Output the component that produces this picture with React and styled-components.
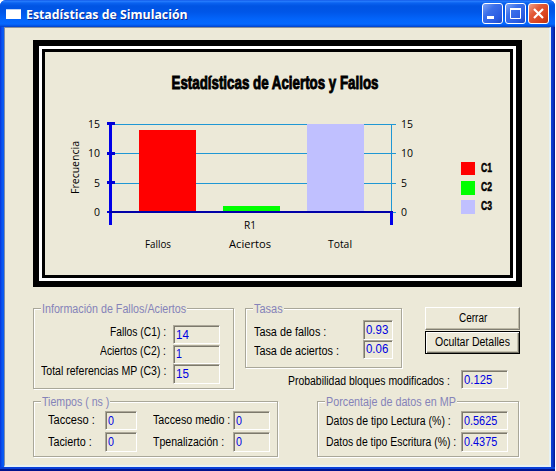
import React, { useLayoutEffect, useRef, useState } from "react";
import styled, { createGlobalStyle, css } from "styled-components";

const FACE = "#ece9d8";

const GlobalStyle = createGlobalStyle`
  * { box-sizing: border-box; }
  body {
    margin: 0;
    background: #fff;
    font: 12.5px/14px "Liberation Sans", Arial, sans-serif;
    color: #000;
    overflow: hidden;
  }
`;

const FitBox = styled.span`
  display: block;
  flex: none;
  width: ${(p) => p.$w}px;
  height: 14px;
  line-height: 14px;
  white-space: nowrap;
`;

const FitText = styled.span`
  display: inline-block;
  transform-origin: 0 0;
`;

/* Condenses a line of text to the pixel width of the bitmap UI font. */
function Fit({ w, children }) {
  const ref = useRef(null);
  const [scale, setScale] = useState(1);
  useLayoutEffect(() => {
    setScale(w / ref.current.offsetWidth);
  }, [w, children]);
  return (
    <FitBox $w={w}>
      <FitText ref={ref} style={{ transform: `scaleX(${scale})` }}>{children}</FitText>
    </FitBox>
  );
}

const Window = styled.div`
  width: 555px;
  height: 471px;
  display: flex;
  flex-direction: column;
  padding: 0 4px 4px;
  border-radius: 6px 6px 0 0;
  background: linear-gradient(90deg, #0831d9, #0855f0 2px, #0a5cf5 4px, #0a40d8 551px, #0a35c4 553px, #00138c 555px);
  box-shadow: inset 0 -2px 0 #00138c, inset 0 -4px 0 #0a40d8;
`;

const TitleBar = styled.header`
  flex: none;
  height: 27px;
  margin: 0 -4px;
  padding: 0 6px 0 6px;
  display: flex;
  align-items: center;
  border-radius: 6px 6px 0 0;
  background: linear-gradient(180deg, #0a4ce0 0, #2a80ff 1px, #0a62f0 3px, #0054e3 6px, #0056e8 12px, #0364fa 19px, #0468ff 24px, #0250e0 26px, #0140c8 27px);
`;

const AppIcon = styled.i`
  width: 15px;
  height: 10px;
  margin-right: 5px;
  background: #fff;
  border-top: 1px solid #b9d2f8;
`;

const Caption = styled.h1`
  flex: 1;
  margin: 1px 0 0;
  font: bold 13px/14px "Open Sans", "Noto Sans", sans-serif;
  color: #fff;
  text-shadow: 1px 1px 0 #0a2a90;
`;

const Controls = styled.div`
  display: flex;
  gap: 2px;
`;

const ControlButton = styled.button`
  width: 21px;
  height: 21px;
  padding: 0;
  border: 1px solid #fff;
  border-radius: 3px;
  background: ${(p) =>
    p.$close
      ? "linear-gradient(135deg, #f0a08a, #e35a38 35%, #d8401c 75%, #b83410)"
      : "linear-gradient(135deg, #7ea4f4, #3c70ea 35%, #2a5ce2 75%, #1c48c4)"};
  svg { display: block; }
`;

const Client = styled.main`
  flex: 1;
  padding: 12px 29px 0 28px;
  border: solid;
  border-width: 1px 2px 2px 1px;
  border-color: #8a8f98 #e6f1f4 #e6f1f4 #7d8ca8;
  background: ${FACE};
`;

const ChartFrame = styled.section`
  width: 489px;
  height: 247px;
  border: 6px solid #000;
  box-shadow: inset 0 0 0 3px #fff, inset 0 0 0 6px #000;
  padding: 6px;
  svg { display: block; }
`;

const Line = styled.div`
  display: flex;
  align-items: flex-start;
`;

const UpperPanels = styled(Line)`
  margin-top: 21px;
  height: 83px;
  gap: 11px;
`;

const UpperRight = styled.div`
  width: 275px;
`;

const RatesAndButtons = styled(Line)`
  justify-content: space-between;
  height: 62px;
`;

const LowerPanels = styled(Line)`
  margin-top: 10px;
  gap: 39px;
`;

const Group = styled.section`
  flex: none;
  width: ${(p) => p.$w}px;
  height: ${(p) => p.$h}px;
  border: 1px solid #a9a799;
  box-shadow: 1px 1px 0 #fff, inset 1px 1px 0 #fff;
`;

const GroupTitle = styled.h2`
  display: table;
  margin: -7px 0 0 7px;
  padding: 0 1px;
  font: inherit;
  color: #8583b8;
  background: ${FACE};
`;

const Rows = styled.div`
  display: grid;
  grid-template-rows: ${(p) => p.$rows};
  row-gap: ${(p) => p.$gap || 0}px;
  padding: ${(p) => p.$pad};
`;

const FieldRow = styled(Line)`
  justify-content: ${(p) => (p.$end ? "flex-end" : "space-between")};
  gap: ${(p) => p.$gap}px;
`;

const LabelSlot = styled.span`
  margin-top: ${(p) => p.$top || 0}px;
`;

const Value = styled.output`
  display: block;
  flex: none;
  width: ${(p) => p.$w}px;
  height: ${(p) => p.$h || 19}px;
  padding: ${(p) => p.$pad || 2}px 0 0 2px;
  border: 1px solid;
  border-color: #aca899 #fff #fff #aca899;
  box-shadow: inset 1px 1px 0 #7c796c;
  color: #0000e0;
`;

const ButtonStack = styled.div`
  display: grid;
  gap: 1px;
  margin-top: -1px;
`;

const raised = css`
  border: 1px solid;
  border-color: #fff #807e72 #807e72 #fff;
  box-shadow: inset -1px -1px 0 #bdb9a6;
`;

const focused = css`
  border: 1px solid #000;
  box-shadow: inset 1px 1px 0 #fff, inset -1px -1px 0 #716f64, inset -2px -2px 0 #c4c0ae;
`;

const PushButton = styled.button`
  width: 95px;
  height: 23px;
  padding: 0 0 1px;
  display: flex;
  align-items: center;
  justify-content: center;
  background: ${FACE};
  font: inherit;
  color: #000;
  ${(p) => (p.$focused ? focused : raised)}
`;

const ProbabilityRow = styled(Line)`
  padding-left: 43px;
  gap: 11px;
`;

const ChartText = styled.text`
  font: 11.5px "Open Sans", "Noto Sans", sans-serif;
  fill: #000;
`;

const HeavyText = styled.text`
  font: bold ${(p) => p.$size}px "Liberation Sans Narrow", "Liberation Sans", sans-serif;
  fill: #000;
  stroke: #000;
  stroke-width: ${(p) => p.$weight}px;
`;

const AXIS = [
  { label: "15", y: 124, tick: 122, base: 128 },
  { label: "10", y: 153, tick: 152, base: 157 },
  { label: "5", y: 183, tick: 181, base: 187 },
  { label: "0", y: 212, tick: 211, base: 216 },
];
const BARS = [
  { label: "Fallos", x: 139, y: 130, color: "#ff0000", tx: 145, tw: 26 },
  { label: "Aciertos", x: 223, y: 206, color: "#00ff00", tx: 229, tw: 42 },
  { label: "Total", x: 307, y: 124, color: "#c0c0ff", tx: 328, tw: 24 },
];
const LEGEND = [
  { label: "C1", y: 162, h: 13, color: "#ff0000" },
  { label: "C2", y: 181, h: 14, color: "#00ff00" },
  { label: "C3", y: 200, h: 14, color: "#c0c0ff" },
];

function Chart() {
  return (
    <svg width="465" height="223" viewBox="45 52 465 223" shapeRendering="crispEdges">
      <HeavyText $size={18} $weight={0.9} x="171.500" y="89" textLength="207" lengthAdjust="spacingAndGlyphs">
        Estadísticas de Aciertos y Fallos
      </HeavyText>
      {AXIS.map((a) => (
        <g key={a.label}>
          <rect x="112" y={a.y} width="284" height="1" fill="#1f97d4" />
          <ChartText x={a.label.length > 1 ? 88 : 94} y={a.base} textLength={a.label.length * 6} lengthAdjust="spacingAndGlyphs">{a.label}</ChartText>
          <ChartText x="401" y={a.base} textLength={a.label.length * 6} lengthAdjust="spacingAndGlyphs">{a.label}</ChartText>
        </g>
      ))}
      <rect x="391" y="124" width="1" height="88" fill="#1f97d4" />
      {BARS.map((b) => (
        <g key={b.label}>
          <rect x={b.x} y={b.y} width="57" height={211 - b.y} fill={b.color} />
          <ChartText x={b.tx} y="248" textLength={b.tw} lengthAdjust="spacingAndGlyphs">{b.label}</ChartText>
        </g>
      ))}
      <rect x="109" y="122" width="3" height="103" fill="#0000e8" />
      {AXIS.map((a) => (
        <rect key={a.label} x="107" y={a.tick} width="8" height={a.label === "0" ? 2 : 3} fill="#0000d8" />
      ))}
      <rect x="109" y="211" width="284" height="2" fill="#0000a8" />
      <rect x="390" y="212" width="3" height="13" fill="#0000e8" />
      <ChartText x="244" y="229" textLength="12" lengthAdjust="spacingAndGlyphs">R1</ChartText>
      <ChartText transform="translate(79 194) rotate(-90)" textLength="53" lengthAdjust="spacingAndGlyphs">Frecuencia</ChartText>
      {LEGEND.map((l) => (
        <g key={l.label}>
          <rect x="461" y={l.y} width="14" height={l.h} fill={l.color} />
          <HeavyText $size={12.5} $weight={0.5} x="481" y={l.y + 10} textLength="11" lengthAdjust="spacingAndGlyphs">{l.label}</HeavyText>
        </g>
      ))}
    </svg>
  );
}

function Field({ label, lw, value, vw, w, h, end, top, pad, gap = 7 }) {
  return (
    <FieldRow $end={end} $gap={gap}>
      <LabelSlot $top={top}><Fit w={lw}>{label}</Fit></LabelSlot>
      <Value $w={w} $h={h} $pad={pad}><Fit w={vw}>{value}</Fit></Value>
    </FieldRow>
  );
}

export default function App() {
  return (
    <>
      <GlobalStyle />
      <Window>
        <TitleBar>
          <AppIcon />
          <Caption><Fit w={162}>Estadísticas de Simulación</Fit></Caption>
          <Controls>
            <ControlButton aria-label="Minimizar">
              <svg width="19" height="19"><rect x="4" y="12" width="7" height="3" fill="#fff" /></svg>
            </ControlButton>
            <ControlButton aria-label="Maximizar">
              <svg width="19" height="19"><path d="M4.500 4.500h10v10h-10z" fill="none" stroke="#fff" /><path d="M4 5h11" stroke="#fff" strokeWidth="2" /></svg>
            </ControlButton>
            <ControlButton $close aria-label="Cerrar ventana">
              <svg width="19" height="19"><path d="M5 5l9 9M14 5l-9 9" stroke="#fff" strokeWidth="2.200" /></svg>
            </ControlButton>
          </Controls>
        </TitleBar>
        <Client>
          <ChartFrame><Chart /></ChartFrame>
          <UpperPanels>
            <Group $w={201} $h={81}>
              <GroupTitle><Fit w={144}>Información de Fallos/Aciertos</Fit></GroupTitle>
              <Rows $rows="20px 19px 20px" $pad="9px 13px 0 0">
                <Field end label="Fallos (C1) :" lw={56} value="14" vw={13} w={47} />
                <Field end label="Aciertos (C2) :" lw={66} value="1" vw={6} w={47} top={-1} pad={1} />
                <Field end label="Total referencias MP (C3) :" lw={125} value="15" vw={13} w={47} h={20} />
              </Rows>
            </Group>
            <UpperRight>
              <RatesAndButtons>
                <Group $w={157} $h={60}>
                  <GroupTitle><Fit w={29}>Tasas</Fit></GroupTitle>
                  <Rows $rows="20px 19px" $pad="4px 8px 0 8px">
                    <Field label="Tasa de fallos :" lw={72} value="0.93" vw={22} w={30} h={20} top={5} />
                    <Field label="Tasa de aciertos :" lw={85} value="0.06" vw={22} w={30} top={4} pad={1} />
                  </Rows>
                </Group>
                <ButtonStack>
                  <PushButton><Fit w={28}>Cerrar</Fit></PushButton>
                  <PushButton $focused><Fit w={75}>Ocultar Detalles</Fit></PushButton>
                </ButtonStack>
              </RatesAndButtons>
              <ProbabilityRow>
                <LabelSlot $top={4}><Fit w={162}>Probabilidad bloques modificados :</Fit></LabelSlot>
                <Value $w={47}><Fit w={28}>0.125</Fit></Value>
              </ProbabilityRow>
            </UpperRight>
          </UpperPanels>
          <LowerPanels>
            <Group $w={245} $h={56}>
              <GroupTitle><Fit w={67}>Tiempos ( ns )</Fit></GroupTitle>
              <Line>
                <Rows $rows="19px 20px" $gap={2} $pad="2px 0 0 14px">
                  <Field gap={10} label="Tacceso :" lw={47} value="0" vw={6} w={32} top={2} />
                  <Field gap={10} label="Tacierto :" lw={44} value="0" vw={6} w={32} h={20} top={3} />
                </Rows>
                <Rows $rows="19px 20px" $gap={2} $pad="2px 0 0 16px">
                  <Field gap={3} label="Tacceso medio :" lw={77} value="0" vw={6} w={37} top={2} />
                  <Field gap={3} label="Tpenalización :" lw={71} value="0" vw={6} w={37} h={20} top={3} />
                </Rows>
              </Line>
            </Group>
            <Group $w={202} $h={56}>
              <GroupTitle><Fit w={130}>Porcentaje de datos en MP</Fit></GroupTitle>
              <Rows $rows="19px 20px" $gap={2} $pad="2px 10px 0 8px">
                <Field gap={5} label="Datos de tipo Lectura (%) :" lw={125} value="0.5625" vw={33} w={47} top={3} />
                <Field gap={5} label="Datos de tipo Escritura (%) :" lw={130} value="0.4375" vw={33} w={47} h={20} top={3} />
              </Rows>
            </Group>
          </LowerPanels>
        </Client>
      </Window>
    </>
  );
}
